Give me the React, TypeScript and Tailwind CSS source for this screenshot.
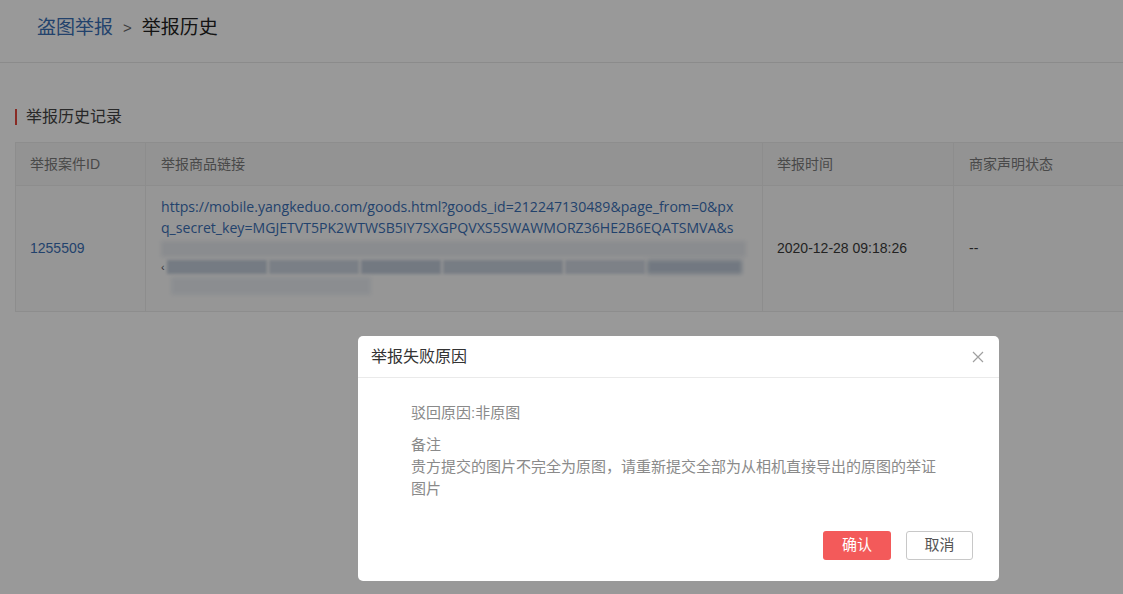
import React from 'react';

const font = { fontFamily: '"Liberation Sans", "Noto Sans CJK SC", sans-serif' };

const urlLines = [
  'https://mobile.yangkeduo.com/goods.html?goods_id=212247130489&page_from=0&px',
  'q_secret_key=MGJETVT5PK2WTWSB5IY7SXGPQVXS5SWAWMORZ36HE2B6EQATSMVA&s',
];

// blurred part of the link (it was pixelated in the source)
const BlurredLink = () => (
  <div className="mt-[3px] space-y-[2px]">
    <div className="h-[16px] w-[585px] bg-[#e6e9ee] blur-[2px]" />
    <div className="flex h-[16px] items-center gap-[2px]">
      <span className="text-[11px] text-[#556]">‹</span>
      <div className="h-[14px] w-[100px] bg-[#c3cdda] blur-[1.5px]" />
      <div className="h-[14px] w-[90px] bg-[#ccd4df] blur-[1.5px]" />
      <div className="h-[14px] w-[80px] bg-[#c0cad8] blur-[1.5px]" />
      <div className="h-[14px] w-[120px] bg-[#c7d0dc] blur-[1.5px]" />
      <div className="h-[14px] w-[80px] bg-[#d0d7e1] blur-[1.5px]" />
      <div className="h-[14px] w-[95px] bg-[#bec9d7] blur-[2px]" />
    </div>
    <div className="ml-[10px] h-[18px] w-[200px] bg-[#e8ecf1] blur-[2px]" />
  </div>
);

export default function App() {
  return (
    <div className="relative h-[594px] w-[1123px] overflow-hidden bg-white" style={font}>
      {/* page */}
      <div className="flex h-[63px] items-center border-b border-[#e8e8e8] pl-[37px] pb-[6px] text-[19px]">
        <span className="text-[#3a6fb5]">盗图举报</span>
        <span className="mx-[10px] text-[15px] text-[#666]">&gt;</span>
        <span className="text-[#222]">举报历史</span>
      </div>

      <div className="mt-[42px] flex items-center pl-[15px]">
        <div className="h-[16px] w-[2px] bg-[#e5483f]" />
        <span className="ml-[9px] text-[16px] text-[#444]">举报历史记录</span>
      </div>

      <div className="ml-[15px] mt-[13px] w-[1140px] border border-[#ebebeb] text-[14px]">
        <div className="flex h-[42px] items-center bg-[#f5f5f5] text-[#7a7a7a]">
          <div className="flex h-full w-[130px] shrink-0 items-center border-r border-[#ebebeb] pl-[14px]">举报案件ID</div>
          <div className="flex h-full w-[617px] shrink-0 items-center border-r border-[#ebebeb] pl-[15px]">举报商品链接</div>
          <div className="flex h-full w-[191px] shrink-0 items-center border-r border-[#ebebeb] pl-[14px]">举报时间</div>
          <div className="flex h-full w-[200px] shrink-0 items-center pl-[15px]">商家声明状态</div>
        </div>
        <div className="flex h-[126px] border-t border-[#ebebeb] bg-[#fbfbfb]">
          <div className="flex w-[130px] shrink-0 items-center border-r border-[#ebebeb] pl-[14px] text-[#3a6fb5]">1255509</div>
          <div className="w-[617px] shrink-0 border-r border-[#ebebeb] pl-[15px] pt-[10px] text-[#3a6fb5]">
            {urlLines.map((l) => (
              <div key={l} className="whitespace-nowrap leading-[21px]" style={{ fontFamily: '"Open Sans", sans-serif', fontSize: '14.1px' }}>
                {l}
              </div>
            ))}
            <BlurredLink />
          </div>
          <div className="flex w-[191px] shrink-0 items-center border-r border-[#ebebeb] pl-[14px] text-[#3a3a3a]">2020-12-28 09:18:26</div>
          <div className="flex w-[200px] shrink-0 items-center pl-[15px] text-[#3a3a3a]">--</div>
        </div>
      </div>

      {/* mask */}
      <div className="absolute inset-0 bg-black/40" />

      {/* dialog */}
      <div className="absolute left-[358px] top-[336px] flex h-[245px] w-[641px] flex-col rounded-[5px] bg-white">
        <div className="flex h-[42px] items-center justify-between border-b border-[#eaeaea] pl-[13px] pr-[15px]">
          <span className="text-[16px] text-[#333]">举报失败原因</span>
          <svg width="12" height="12" viewBox="0 0 12 12" className="text-[#a0a0a0]">
            <path d="M1 1L11 11M11 1L1 11" stroke="currentColor" strokeWidth="1.2" />
          </svg>
        </div>
        <div className="pl-[53px] pr-[55px] pt-[24px] text-[15px] leading-[22px] text-[#8a8a8a]">
          <div>驳回原因:非原图</div>
          <div className="mt-[10px]">备注</div>
          <div>贵方提交的图片不完全为原图，请重新提交全部为从相机直接导出的原图的举证图片</div>
        </div>
        <div className="mt-auto flex justify-end gap-[15px] pb-[21px] pr-[26px]">
          <button className="h-[29px] w-[68px] rounded-[3px] bg-[#f35a5a] text-[15px] text-white">确认</button>
          <button className="h-[29px] w-[67px] rounded-[3px] border border-[#c8c8c8] bg-white text-[15px] text-[#555]">取消</button>
        </div>
      </div>
    </div>
  );
}
